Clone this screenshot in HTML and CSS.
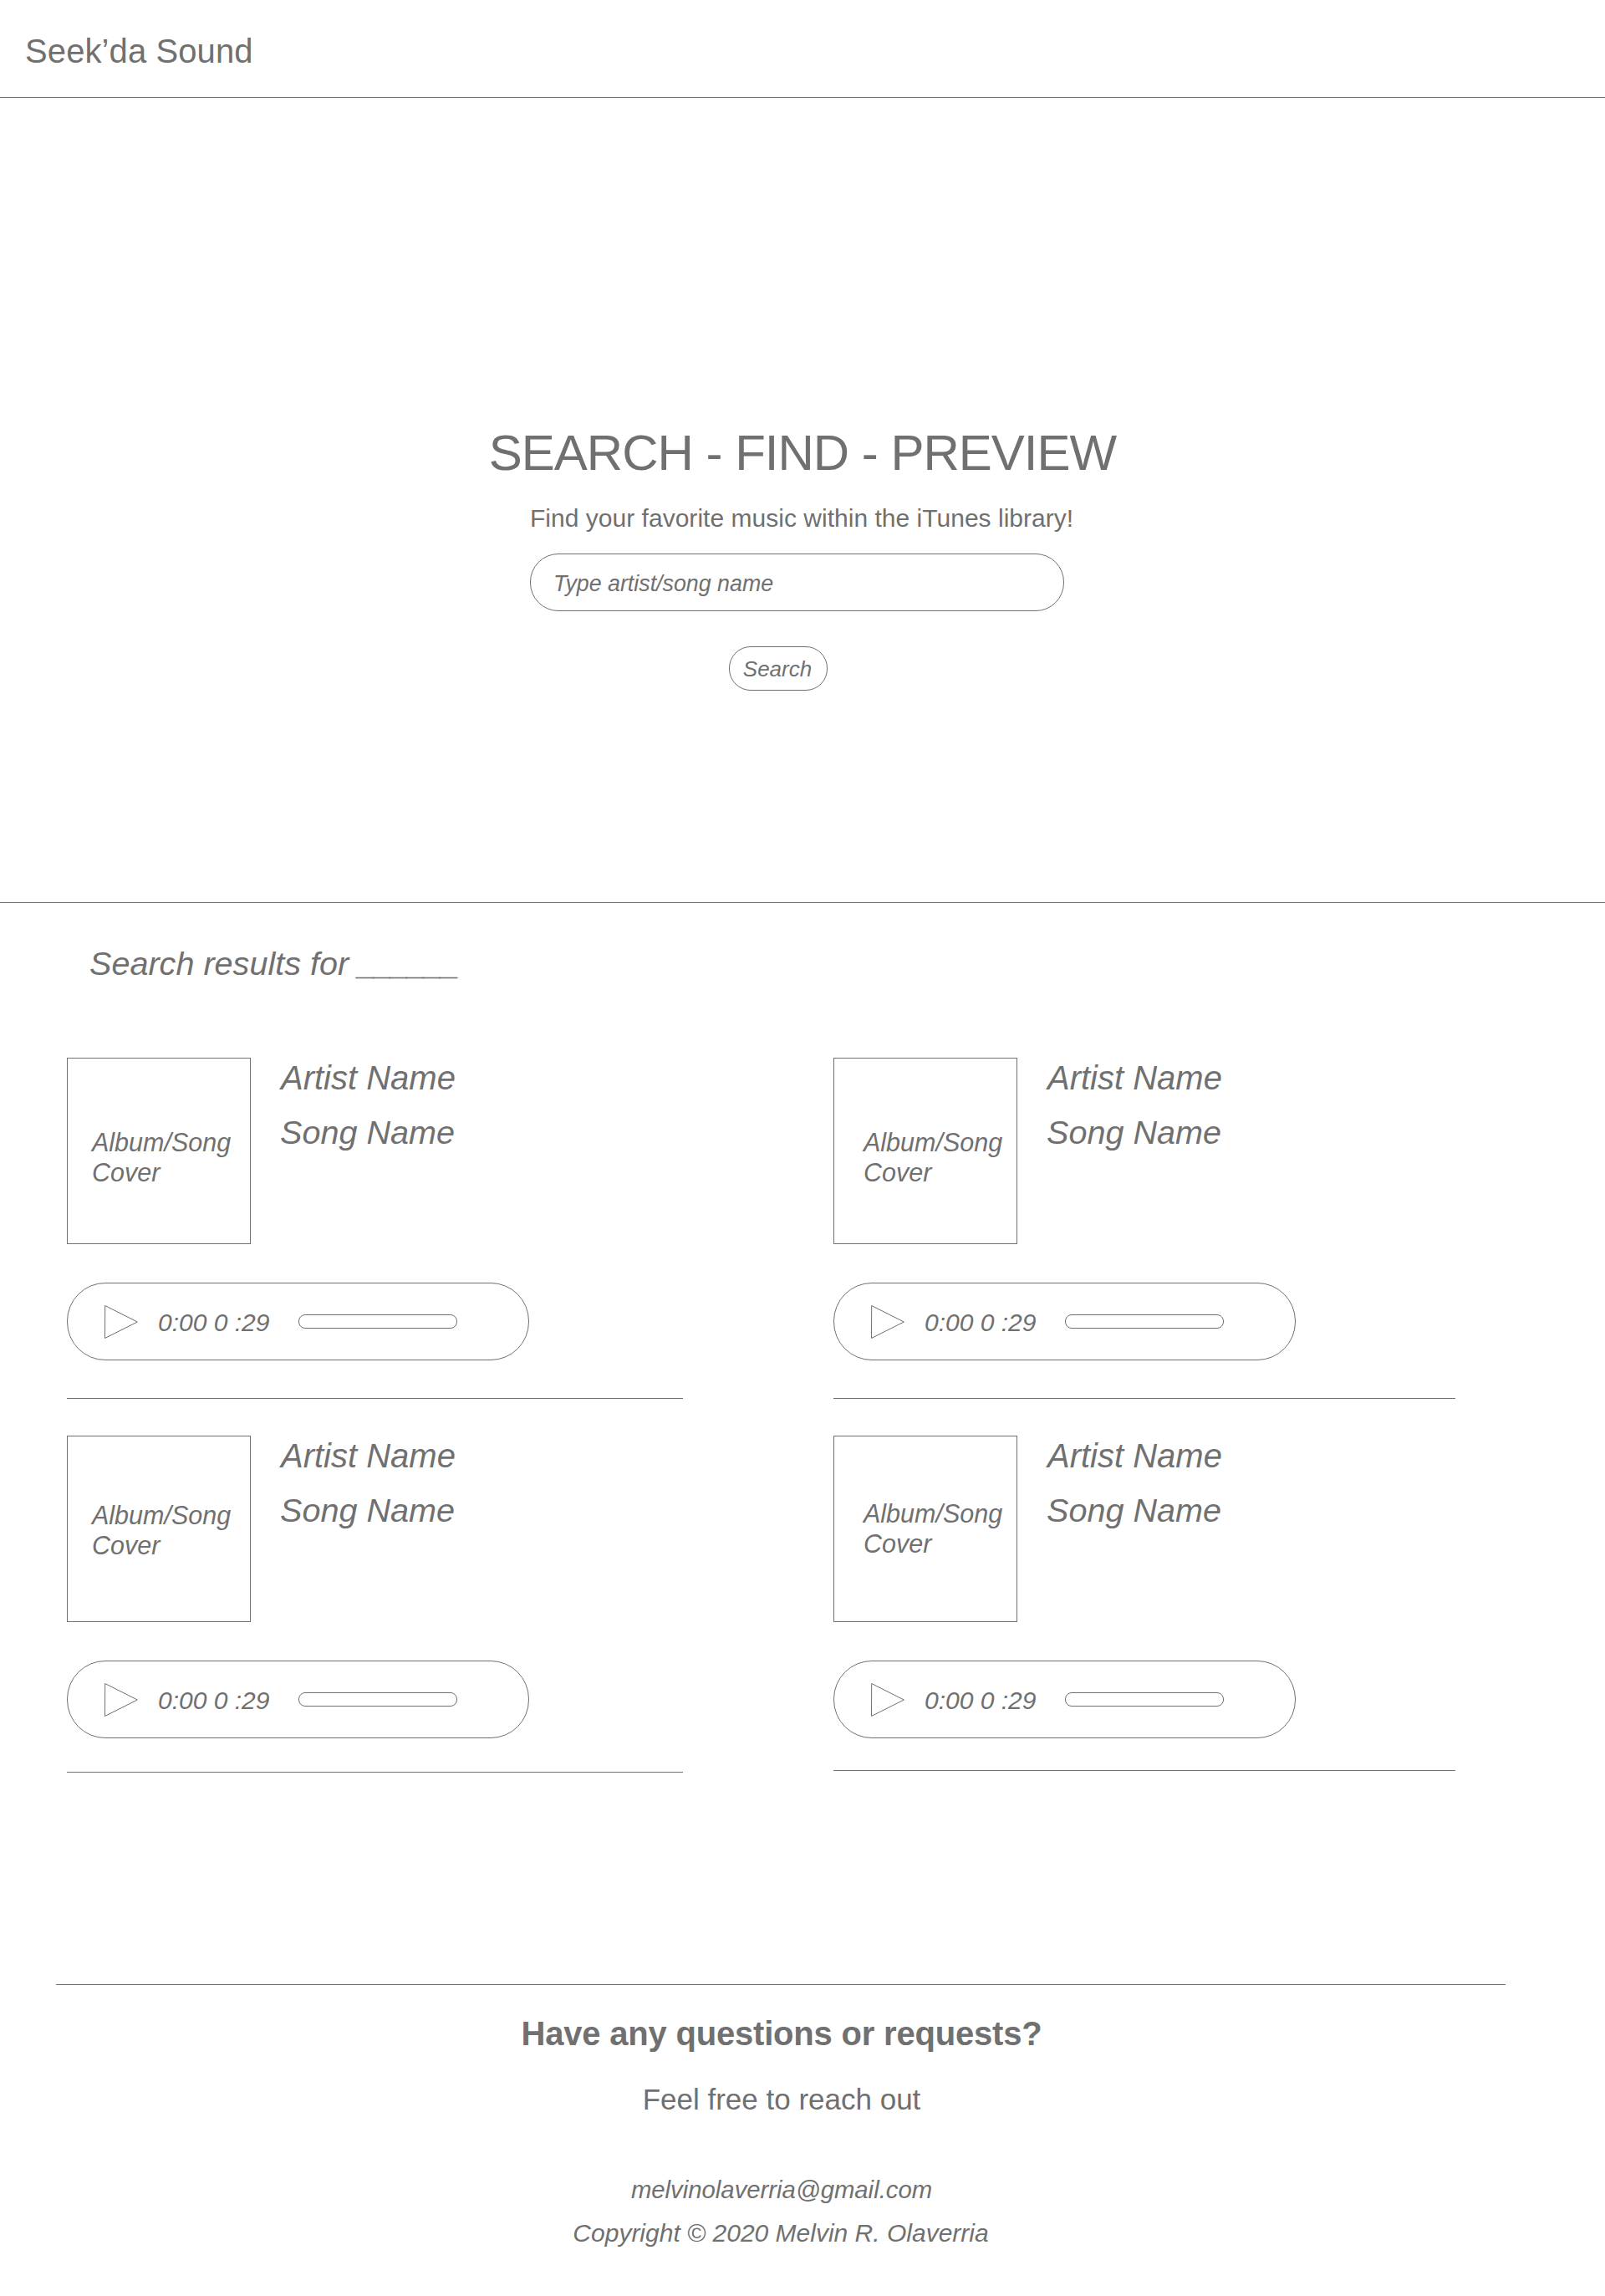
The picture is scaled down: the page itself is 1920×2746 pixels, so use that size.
FILE: index.html
```html
<!DOCTYPE html>
<html lang="en">
<head>
<meta charset="utf-8">
<title>Seek'da Sound</title>
<link rel="stylesheet" href="styles.css">
</head>
<body>
<header class="topbar"><a class="brand">Seek’da Sound</a></header>
<section class="hero">
  <h1 class="hero-title">SEARCH - FIND - PREVIEW</h1>
  <form class="search-form">
    <p class="hero-sub">Find your favorite music within the iTunes library!</p>
    <input class="search-input" type="text" placeholder="Type artist/song name">
    <button class="search-btn" type="button">Search</button>
  </form>
</section>
<main class="results">
  <h2 class="results-title">Search results for <span class="blank">______</span></h2>
  <div class="grid">
    <article class="card card-a">
      <div class="card-top">
        <div class="cover"><span>Album/Song</span><span>Cover</span></div>
        <div class="info"><p>Artist Name</p><p>Song Name</p></div>
      </div>
      <div class="player">
        <svg class="play" viewBox="0 0 40 40" width="40" height="40"><path d="M0.7 0.5 L39.3 20 L0.5 39.5 Z"/></svg>
        <span class="time">0:00 0 :29</span>
        <div class="bar"></div>
      </div>
    </article>
    <article class="card card-b">
      <div class="card-top">
        <div class="cover"><span>Album/Song</span><span>Cover</span></div>
        <div class="info"><p>Artist Name</p><p>Song Name</p></div>
      </div>
      <div class="player">
        <svg class="play" viewBox="0 0 40 40" width="40" height="40"><path d="M0.7 0.5 L39.3 20 L0.5 39.5 Z"/></svg>
        <span class="time">0:00 0 :29</span>
        <div class="bar"></div>
      </div>
    </article>
    <article class="card card-c">
      <div class="card-top">
        <div class="cover"><span>Album/Song</span><span>Cover</span></div>
        <div class="info"><p>Artist Name</p><p>Song Name</p></div>
      </div>
      <div class="player">
        <svg class="play" viewBox="0 0 40 40" width="40" height="40"><path d="M0.7 0.5 L39.3 20 L0.5 39.5 Z"/></svg>
        <span class="time">0:00 0 :29</span>
        <div class="bar"></div>
      </div>
    </article>
    <article class="card card-d">
      <div class="card-top">
        <div class="cover"><span>Album/Song</span><span>Cover</span></div>
        <div class="info"><p>Artist Name</p><p>Song Name</p></div>
      </div>
      <div class="player">
        <svg class="play" viewBox="0 0 40 40" width="40" height="40"><path d="M0.7 0.5 L39.3 20 L0.5 39.5 Z"/></svg>
        <span class="time">0:00 0 :29</span>
        <div class="bar"></div>
      </div>
    </article>
  </div>
</main>
<footer class="footer">
  <h3 class="footer-title">Have any questions or requests?</h3>
  <p class="footer-sub">Feel free to reach out</p>
  <p class="footer-mail">melvinolaverria@gmail.com</p>
  <p class="footer-copy">Copyright © 2020 Melvin R. Olaverria</p>
</footer>
</body>
</html>
```
FILE: styles.css
```css
* { box-sizing: border-box; }
html, body { margin: 0; padding: 0; background: #fff; }
body {
  font-family: "Liberation Sans", Arial, sans-serif;
  color: #707070;
  height: 2746px;
  overflow: hidden;
}
h1, h2, h3, p { margin: 0; font-weight: 400; }

.topbar { height: 117px; border-bottom: 1px solid #707070; padding: 38px 0 0 30px; }
.brand { font-size: 40px; line-height: 46px; display: block; letter-spacing: 0.1px; }

.hero { height: 963px; border-bottom: 1px solid #707070; padding-top: 395px; }
.hero-title { font-size: 60px; line-height: 60px; text-align: center; letter-spacing: -1px; }
.search-form { width: 650px; margin: 30px auto 0 634px; display: flex; flex-direction: column; align-items: flex-start; }
.hero-sub { font-size: 30px; line-height: 36px; white-space: nowrap; letter-spacing: 0.02px; }
.search-input {
  width: 639px; height: 69px; margin-top: 24px; padding: 4px 27px 0;
  border: 1px solid #707070; border-radius: 34px; background: #fff; outline: none;
  font: italic 26.8px "Liberation Sans", Arial, sans-serif; color: #707070;
}
.search-input::placeholder { color: #707070; opacity: 1; }
.search-btn {
  width: 118px; height: 53px; margin: 42px 0 0 238px; padding: 2px 2px 0 0;
  border: 1px solid #707070; border-radius: 26px; background: #fff; color: #707070;
  font: italic 26px "Liberation Sans", Arial, sans-serif;
}

.results { padding-top: 52px; }
.results-title { font-size: 39.6px; line-height: 40px; font-style: italic; padding-left: 107px; margin-bottom: 93px; }
.blank { letter-spacing: -2.1px; }
.grid { display: grid; grid-template-columns: 737px 744px; column-gap: 180px; row-gap: 44px; margin-left: 80px; align-items: start; }
.card { border-bottom: 1px solid #707070; padding-bottom: 45px; }
.card-top { display: flex; gap: 36px; }
.cover {
  width: 220px; height: 223px; border: 1px solid #707070; padding: 82px 0 0 29px;
  display: flex; flex-direction: column;
  font-size: 30.5px; line-height: 36px; font-style: italic; white-space: nowrap;
}
.card-b .cover { padding-left: 35px; }
.card-c .cover { padding-top: 76px; }
.card-d .cover { padding: 74px 0 0 35px; }
.card-c { padding-bottom: 40px; }
.card-d { padding-bottom: 38px; }
.info { padding-top: 4px; font-size: 40px; line-height: 40px; font-style: italic; white-space: nowrap; }
.info p + p { margin-top: 25px; font-size: 39.6px; margin-left: -1px; }
.player {
  width: 553px; height: 93px; margin-top: 46px; padding-left: 44px;
  border: 1px solid #707070; border-radius: 46px;
  display: flex; align-items: center;
}
.play { fill: none; stroke: #707070; stroke-width: 1; flex: none; }
.time { font-size: 30px; line-height: 36px; font-style: italic; margin-left: 25px; white-space: nowrap; position: relative; top: 1px; left: -1px; }
.bar { width: 190px; height: 17px; margin-left: 34px; border: 1px solid #707070; border-radius: 8px; }

.footer { width: 1734px; margin: 253px 0 0 67px; border-top: 1px solid #707070; padding: 38px 0 0 2px; text-align: center; }
.footer-title { font-size: 40px; line-height: 40px; font-weight: 700; letter-spacing: -0.2px; }
.footer-sub { font-size: 35px; line-height: 40px; margin-top: 39px; }
.footer-mail { font-size: 29.3px; line-height: 36px; font-style: italic; margin-top: 70px; }
.footer-copy { font-size: 30px; line-height: 36px; font-style: italic; margin-top: 16px; padding-right: 2px; }
```
